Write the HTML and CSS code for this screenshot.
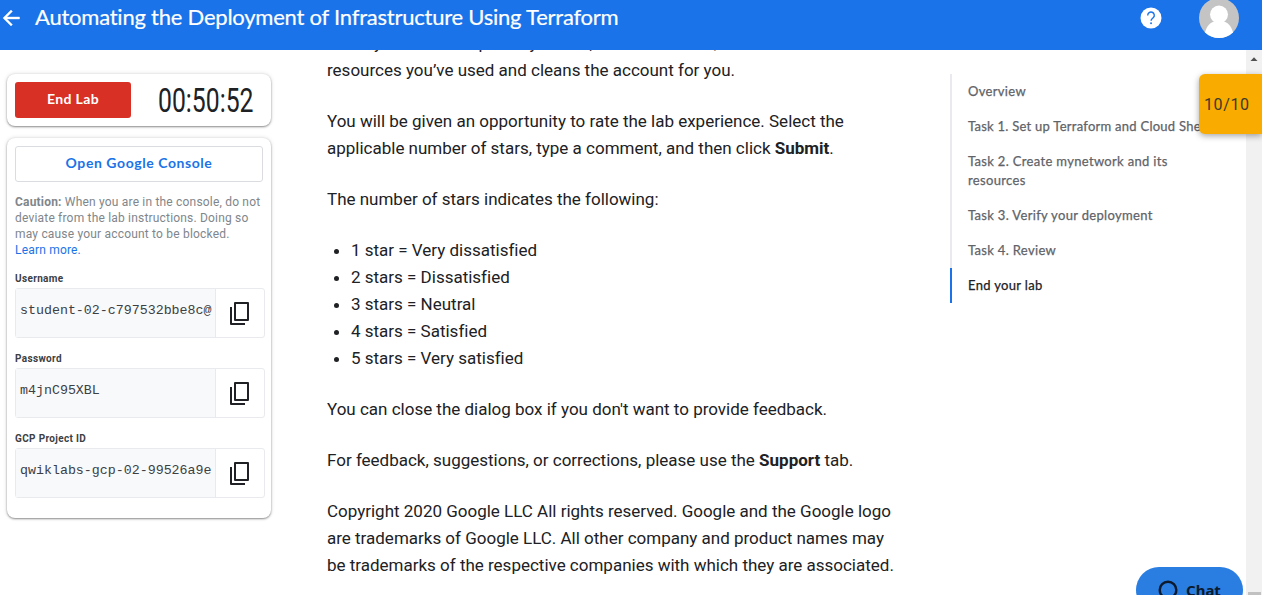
FILE: index.html
```html
<!DOCTYPE html>
<html lang="en">
<head>
<meta charset="utf-8">
<title>Automating the Deployment of Infrastructure Using Terraform</title>
<link rel="stylesheet" href="styles.css">
</head>
<body>
<header class="header">
  <svg class="back" width="24" height="24" viewBox="0 0 24 24"><path fill="#fff" stroke="#fff" stroke-width=".4" d="M20.500 11H7.830l5.590-5.590L12 4l-8 8 8 8 1.410-1.410L7.830 13H20.500v-2z"/></svg>
  <h1 class="title"><span class="title-text">Automating the Deployment of Infrastructure Using Terraform</span></h1>
  <svg class="help" width="22" height="22" viewBox="0 0 22 22"><circle cx="11" cy="11" r="10.5" fill="#fff"/><path d="M7.700 8.400a3.300 3.300 0 1 1 5.700 2.200c-1.100 1.100-2.300 1.600-2.300 3.200" fill="none" stroke="#1a73e8" stroke-width="1.400"/><rect x="10.200" y="15.400" width="1.700" height="1.700" fill="#1a73e8"/></svg>
  <svg class="avatar" width="40" height="40" viewBox="0 0 40 40"><defs><clipPath id="av"><circle cx="20" cy="20" r="20"/></clipPath></defs><g clip-path="url(#av)"><rect width="40" height="40" fill="#c4c4c4"/><circle cx="20" cy="16.500" r="9" fill="#fff"/><path d="M5 40c1-10 5-15 10-16.500h10c5 1.500 9 6.500 10 16.500z" fill="#fff"/></g></svg>
</header>
<div class="page">
  <aside class="sidebar">
    <section class="card timer-card">
      <button class="end-lab">End Lab</button>
      <div class="timer"><span class="timer-text">00:50:52</span></div>
    </section>
    <section class="card details">
      <button class="console">Open Google Console</button>
      <p class="caution"><b>Caution:</b> When you are in the console, do not<br>deviate from the lab instructions. Doing so<br>may cause your account to be blocked.<br><a class="learn">Learn more.</a></p>
      <div class="label">Username</div>
      <div class="field"><div class="value">student-02-c797532bbe8c@</div><div class="copy"><svg width="24" height="24" viewBox="0 0 24 24"><path class="copy-path" d="M7 2h13v17H7zM3 6v17h14"/></svg></div></div>
      <div class="label">Password</div>
      <div class="field"><div class="value">m4jnC95XBL</div><div class="copy"><svg width="24" height="24" viewBox="0 0 24 24"><path class="copy-path" d="M7 2h13v17H7zM3 6v17h14"/></svg></div></div>
      <div class="label">GCP Project ID</div>
      <div class="field"><div class="value">qwiklabs-gcp-02-99526a9e</div><div class="copy"><svg width="24" height="24" viewBox="0 0 24 24"><path class="copy-path" d="M7 2h13v17H7zM3 6v17h14"/></svg></div></div>
    </section>
  </aside>
  <main class="content">
    <p>When you have completed your lab, click <b>End Lab</b>. Qwiklabs removes the<br>resources you’ve used and cleans the account for you.</p>
    <p>You will be given an opportunity to rate the lab experience. Select the<br>applicable number of stars, type a comment, and then click <b>Submit</b>.</p>
    <p>The number of stars indicates the following:</p>
    <ul class="stars">
      <li>1 star = Very dissatisfied</li>
      <li>2 stars = Dissatisfied</li>
      <li>3 stars = Neutral</li>
      <li>4 stars = Satisfied</li>
      <li>5 stars = Very satisfied</li>
    </ul>
    <p>You can close the dialog box if you don't want to provide feedback.</p>
    <p>For feedback, suggestions, or corrections, please use the <b>Support</b> tab.</p>
    <p>Copyright 2020 Google LLC All rights reserved. Google and the Google logo<br>are trademarks of Google LLC. All other company and product names may<br>be trademarks of the respective companies with which they are associated.</p>
  </main>
  <nav class="outline">
    <a class="item">Overview</a>
    <a class="item task-one">Task 1. Set up Terraform and Cloud Shell</a>
    <a class="item">Task 2. Create mynetwork and its<br>resources</a>
    <a class="item">Task 3. Verify your deployment</a>
    <a class="item">Task 4. Review</a>
    <a class="item active">End your lab</a>
  </nav>
  <div class="scrollbar"><svg width="16" height="16" viewBox="0 0 16 16"><path d="M4.500 11 8 7.200 11.500 11z" fill="#505050"/></svg><div class="thumb"></div></div>
</div>
<div class="score">10/10</div>
<div class="chat"><svg width="22" height="22" viewBox="0 0 22 22"><circle cx="11" cy="11" r="8.300" fill="none" stroke="#0c1a2e" stroke-width="2.400"/></svg><span>Chat</span></div>
</body>
</html>
```
FILE: styles.css
```css
* { box-sizing: border-box; }
body { margin: 0; width: 1262px; height: 595px; overflow: hidden; position: relative; background: #fff; font-family: Roboto, sans-serif; color: #202124; }
.header { height: 50px; background: #1a73e8; display: flex; align-items: flex-start; position: relative; z-index: 2; }
.back { margin: 6px 0 0 -1px; flex: none; }
.title { margin: 2px 0 0 12px; flex: 1; font: 400 22px/30px Lato, sans-serif; color: #fff; white-space: nowrap; }
.title-text { letter-spacing: -0.23px; -webkit-text-stroke: .2px #fff; }
.help { margin: 7px 37px 0 0; flex: none; }
.avatar { margin: -2px 23px 0 0; flex: none; }
.page { height: 545px; display: flex; align-items: flex-start; }
.sidebar { width: 271px; flex: none; padding: 24px 0 0 7px; display: flex; flex-direction: column; gap: 12px; }
.card { border-radius: 8px; background: #fff; box-shadow: 0 1px 2px rgba(0,0,0,.4), 0 0 4px rgba(0,0,0,.15); padding: 8px; }
.timer-card { height: 52px; display: flex; }
.end-lab { width: 116px; height: 36px; flex: none; border: 0; border-radius: 3px; background: #d93025; color: #fff; font: 700 14px Lato, sans-serif; letter-spacing: .35px; padding: 0 0 3px; }
.timer { flex: 1; min-width: 0; padding-left: 27px; font-size: 33px; line-height: 38px; font-weight: 400; white-space: nowrap; }
.timer-text { display: inline-block; transform: scaleX(.75); transform-origin: left; }
.details { height: 380px; }
.console { display: block; width: 248px; height: 36px; padding: 0 0 3px; border: 1px solid #dadce0; border-radius: 3px; background: #fff; color: #1a73e8; font: 700 14px Lato, sans-serif; letter-spacing: .57px; }
.caution { margin: 12px 0 14px; font-size: 12px; line-height: 16px; color: #80868b; white-space: nowrap; letter-spacing: .19px; }
.learn { color: #1a73e8; }
.label { font-size: 10px; font-weight: 700; line-height: 14px; height: 16px; letter-spacing: .34px; color: #3c4043; }
.field { width: 250px; height: 50px; border: 1px solid #e8eaed; border-radius: 3px; display: flex; margin-bottom: 14px; }
.value { width: 200px; background: #f8f9fa; border-right: 1px solid #e8eaed; padding: 13px 0 0 4px; font: 13.300px/18px "Liberation Mono", monospace; color: #3c4043; white-space: nowrap; overflow: hidden; }
.copy { flex: 1; display: flex; align-items: center; justify-content: center; }
.copy-path { fill: none; stroke: #202124; stroke-width: 2; stroke-linejoin: round; }
.content { width: 623px; flex: none; margin-left: 56px; margin-top: -20px; font-size: 17px; line-height: 27px; letter-spacing: -.005px; white-space: nowrap; }
.content p { margin: 0 0 24px; }
.stars { margin: 0 0 24px; padding-left: 24px; }
.outline { width: 296px; flex: none; margin-top: 24px; display: flex; flex-direction: column; font: 400 13px/19px Lato, sans-serif; color: #5f6368; white-space: nowrap; }
.item { border-left: 2px solid #e8eaed; padding: 8px 0 8px 16px; letter-spacing: .33px; -webkit-text-stroke: .25px currentColor; }
.task-one { letter-spacing: .26px; }
.active { border-color: #1a73e8; color: #202124; }
.scrollbar { width: 16px; height: 545px; flex: none; background: #f1f1f1; display: flex; flex-direction: column; justify-content: space-between; }
.thumb { height: 3px; margin: 0 1px 0 2px; background: #c1c1c1; }
.score { position: absolute; left: 1199px; top: 74px; width: 63px; height: 60px; border-radius: 6px 0 0 6px; background: #f9ab00; box-shadow: 0 2px 6px rgba(0,0,0,.35); padding-left: 5px; font-size: 16px; line-height: 61px; letter-spacing: .6px; color: #3c3a2c; }
.chat { position: absolute; left: 1136px; top: 567px; width: 107px; height: 46px; border-radius: 23px; background: #2a7de1; display: flex; align-items: center; gap: 7px; padding-left: 21px; font: 700 15px "Noto Sans", sans-serif; color: #0c1a2e; }
```
